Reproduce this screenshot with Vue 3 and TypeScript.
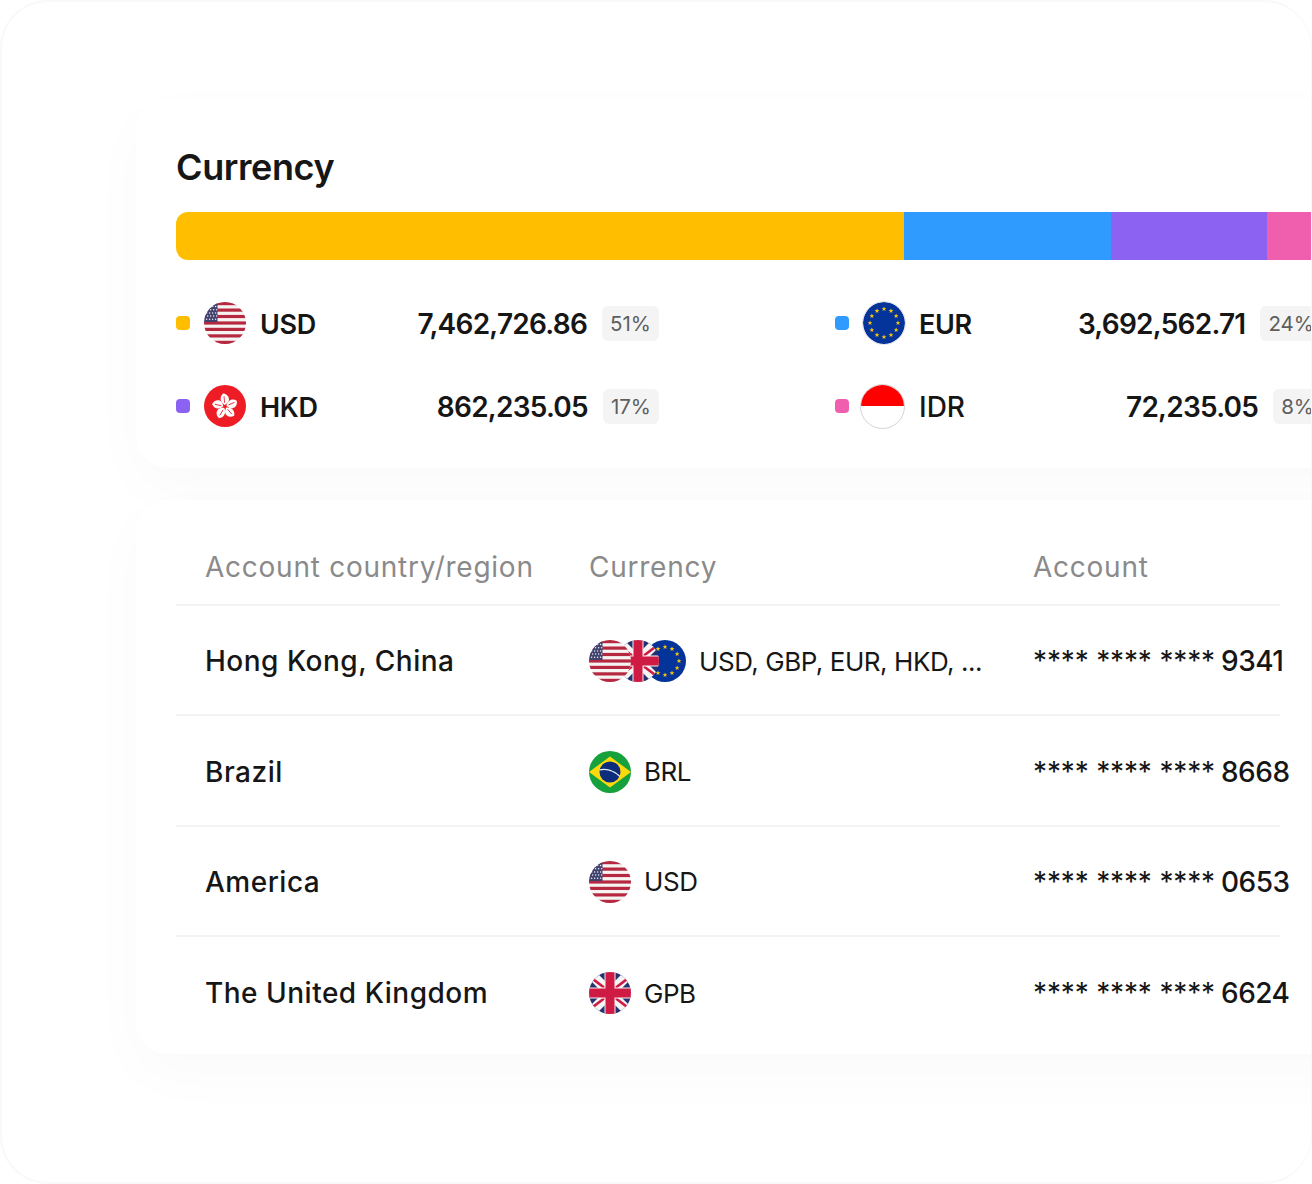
<template>
  <div class="frame">
    <svg class="flag-defs" width="0" height="0" aria-hidden="true">
      <defs>
        <clipPath id="round"><circle cx="21" cy="21" r="21" /></clipPath>
        <polygon id="star" points="0,-2.5 .7,-.8 2.4,-.8 1,.35 1.5,2 0,1 -1.5,2 -1,.35 -2.4,-.8 -.7,-.8" />
        <path id="petal" d="M-.3 -1.5 C-4.5 -4 -5.5 -8.5 -1.8 -12 C2.8 -11.5 4.6 -7.5 3.2 -4.6 C2.5 -3.2 1 -2.2 -.3 -1.5Z" />
        <symbol id="flag-usd" viewBox="0 0 42 42">
          <g clip-path="url(#round)">
            <rect width="42" height="42" fill="#f6f3f3" />
            <rect v-for="y in usStripes" :key="y" x="0" :y="y" width="42" height="3.2" fill="#b5283f" />
            <rect width="13.5" height="20" fill="#42426f" />
            <circle v-for="d in usDots" :key="d.x + '-' + d.y" :cx="d.x" :cy="d.y" r=".75" fill="#eaeaf2" />
          </g>
        </symbol>
        <symbol id="flag-hkd" viewBox="0 0 42 42">
          <circle cx="21" cy="21" r="21" fill="#ee1c25" />
          <g transform="translate(21 21.5) scale(1.08)">
            <g v-for="a in petals" :key="a" :transform="`rotate(${a})`">
              <use href="#petal" fill="#fff" />
              <path d="M-.4 -3.5 L-.9 -9.5" stroke="#ee1c25" stroke-width=".8" fill="none" />
            </g>
          </g>
        </symbol>
        <symbol id="flag-eur" viewBox="0 0 42 42">
          <circle cx="21" cy="21" r="21" fill="#04349a" />
          <use v-for="s in euStars" :key="s.x" href="#star" :x="s.x" :y="s.y" fill="#fbc50b" />
        </symbol>
        <symbol id="flag-gbp" viewBox="0 0 42 42">
          <g clip-path="url(#round)">
            <rect width="42" height="42" fill="#26316f" />
            <path d="M0 0 L42 42 M42 0 L0 42" stroke="#f5f5f5" stroke-width="10" />
            <path d="M0 4 L17 17 M42 4 L25 17 M0 38 L17 25 M42 38 L25 25" stroke="#cf1b43" stroke-width="2.6" />
            <rect x="15.5" width="11" height="42" fill="#f5f5f5" />
            <rect y="15.5" width="42" height="11" fill="#f5f5f5" />
            <rect x="16.5" width="9" height="42" fill="#cf1b43" />
            <rect y="16.5" width="42" height="9" fill="#cf1b43" />
          </g>
        </symbol>
        <symbol id="flag-brl" viewBox="0 0 42 42">
          <g clip-path="url(#round)">
            <rect width="42" height="42" fill="#16a13c" />
            <path d="M21 5.5 L42 21 L21 36.5 L0 21Z" fill="#fbd90c" />
            <circle cx="21" cy="21" r="10.5" fill="#0c2c7c" />
            <path d="M10.8 18.8 C17 17.5 25 19.5 31 25.5" fill="none" stroke="#e9edf4" stroke-width="1.3" />
          </g>
        </symbol>
      </defs>
    </svg>

    <section class="card summary">
      <h1 class="title">Currency</h1>
      <div class="bar">
        <span v-for="s in segments" :key="s.color" class="bar-seg" :style="{ width: s.width + 'px', background: s.color }"></span>
      </div>
      <div class="legend">
        <div v-for="item in legend" :key="item.code" class="legend-item">
          <span class="dot" :style="{ background: item.color }"></span>
          <span v-if="item.code === 'IDR'" class="idr"><span class="idr-top"></span></span>
          <svg v-else class="flag" :class="{ ring: item.code === 'EUR' }" viewBox="0 0 42 42"><use :href="'#flag-' + item.code.toLowerCase()" /></svg>
          <span class="code" :class="{ plain: item.code === 'IDR' }">{{ item.code }}</span>
          <span class="amount">{{ item.amount }}</span>
          <span class="pct">{{ item.pct }}</span>
        </div>
      </div>
    </section>

    <section class="card accounts">
      <div class="row head">
        <span>Account country/region</span>
        <span>Currency</span>
        <span>Account</span>
      </div>
      <div v-for="r in rows" :key="r.name" class="row">
        <span class="name">{{ r.name }}</span>
        <span class="cur">
          <span class="stack">
            <svg v-for="f in r.flags" :key="f" class="flag" viewBox="0 0 42 42"><use :href="'#flag-' + f" /></svg>
          </span>
          <span class="cur-text">{{ r.cur }}</span>
        </span>
        <span class="acc"><span class="mask">**** **** ****</span><span class="last">{{ r.last }}</span></span>
      </div>
    </section>
  </div>
</template>

<script setup lang="ts">
const usStripes = [0, 6.5, 12.9, 19.4, 25.8, 32.3, 38.8]
const usDots: { x: number; y: number }[] = []
for (let r = 0; r < 5; r++) {
  for (let c = 0; c < 4; c++) {
    usDots.push({ x: 2.6 + c * 3 + (r % 2) * 1, y: 4.5 + r * 3.2 })
  }
}
const petals = [0, 72, 144, 216, 288]
const euStars = Array.from({ length: 12 }, (_, i) => ({
  x: 21 + 14 * Math.sin((i * Math.PI) / 6),
  y: 21 - 14 * Math.cos((i * Math.PI) / 6),
}))

const segments = [
  { color: '#ffbf00', width: 728 },
  { color: '#2f9bff', width: 207 },
  { color: '#8c62f2', width: 156 },
  { color: '#f05fae', width: 60 },
]

const legend = [
  { code: 'USD', color: '#ffbf00', amount: '7,462,726.86', pct: '51%' },
  { code: 'EUR', color: '#2f9bff', amount: '3,692,562.71', pct: '24%' },
  { code: 'HKD', color: '#8c62f2', amount: '862,235.05', pct: '17%' },
  { code: 'IDR', color: '#f05fae', amount: '72,235.05', pct: '8%' },
]

const rows = [
  { name: 'Hong Kong, China', flags: ['usd', 'gbp', 'eur'], cur: 'USD, GBP, EUR, HKD, ...', last: '9341' },
  { name: 'Brazil', flags: ['brl'], cur: 'BRL', last: '8668' },
  { name: 'America', flags: ['usd'], cur: 'USD', last: '0653' },
  { name: 'The United Kingdom', flags: ['gbp'], cur: 'GPB', last: '6624' },
]
</script>

<style>
body {
  background: #fff;
}
</style>

<style scoped>
.frame {
  box-sizing: border-box;
  width: 1312px;
  height: 1184px;
  padding: 99px 0 0 134px;
  background: #fff;
  border: 2px solid #f9f9f9;
  border-right-width: 1px;
  border-radius: 48px;
  overflow: hidden;
  display: flex;
  flex-direction: column;
  gap: 34px;
  font-family: Inter, "Liberation Sans", sans-serif;
  color: #161616;
}

.flag-defs {
  position: absolute;
}

.card {
  box-sizing: border-box;
  width: 1300px;
  background: #fff;
  border-radius: 32px;
  box-shadow: 0 20px 60px rgba(0, 0, 0, 0.022);
  flex-shrink: 0;
  margin-top: -2px;
}

.summary {
  height: 369px;
  padding: 44px 0 0 40px;
}

.title {
  margin: 0;
  font-size: 36px;
  line-height: 48px;
  font-weight: 600;
  letter-spacing: -0.4px;
}

.bar {
  display: flex;
  height: 48px;
  margin-top: 21px;
  border-radius: 12px 0 0 12px;
  overflow: hidden;
}

.bar-seg {
  display: block;
  flex-shrink: 0;
}

.legend {
  display: grid;
  grid-template-columns: 483px 487px;
  column-gap: 176px;
  row-gap: 39px;
  margin-top: 41px;
}

.legend-item {
  display: flex;
  align-items: center;
  height: 44px;
}

.dot {
  width: 14px;
  height: 14px;
  border-radius: 4px;
  margin-right: 14px;
  flex-shrink: 0;
}

.flag {
  display: block;
  width: 42px;
  height: 42px;
  flex-shrink: 0;
}

.flag.ring {
  box-sizing: border-box;
  width: 44px;
  height: 44px;
  margin-left: -1px;
  margin-right: -1px;
  border: 1px solid #e4e4e8;
  border-radius: 50%;
}

.idr {
  display: block;
  box-sizing: border-box;
  width: 45px;
  height: 45px;
  margin-left: -3px;
  border: 1px solid #d9d2d2;
  border-radius: 50%;
  overflow: hidden;
  background: #fff;
  flex-shrink: 0;
}

.idr-top {
  display: block;
  height: 50%;
  background: #fe0000;
}

.code {
  margin-left: 14px;
  padding-top: 2px;
  font-size: 27px;
  font-weight: 600;
  letter-spacing: -0.3px;
}

.code.plain {
  font-size: 28px;
  font-weight: 500;
  letter-spacing: 0;
}

.amount {
  margin-left: auto;
  padding-top: 2px;
  font-size: 28px;
  font-weight: 600;
  letter-spacing: -0.75px;
}

.pct {
  box-sizing: border-box;
  height: 35px;
  margin-left: 15px;
  padding: 0 8px;
  border-radius: 6px;
  background: #f4f4f4;
  color: #5e5e5e;
  font-size: 20.5px;
  line-height: 35px;
}

.accounts {
  height: 554px;
  padding: 0 0 0 40px;
}

.row {
  box-sizing: border-box;
  width: 1104px;
  height: 110.4px;
  padding: 2px 0 0 29px;
  display: grid;
  grid-template-columns: 384px 444px 1fr;
  align-items: center;
  border-bottom: 2px solid #f3f3f3;
  white-space: nowrap;
}

.row:last-child {
  border-bottom: none;
}

.head {
  height: 106px;
  padding-top: 29px;
  color: #8a8a8a;
  font-size: 28px;
  letter-spacing: 0.75px;
}

.name {
  font-size: 28px;
  font-weight: 500;
  letter-spacing: 0.5px;
}

.cur {
  display: flex;
  align-items: center;
}

.stack {
  display: flex;
  isolation: isolate;
}

.stack .flag {
  position: relative;
}

.stack .flag + .flag {
  margin-left: -14.5px;
  z-index: -1;
}

.stack .flag + .flag + .flag {
  z-index: -2;
}

.cur-text {
  margin-left: 13px;
  font-size: 26px;
  letter-spacing: -0.45px;
}

.acc {
  display: flex;
  align-items: center;
}

.mask {
  font-size: 28px;
  letter-spacing: -0.15px;
  width: 188px;
}

.last {
  font-size: 28px;
  font-weight: 500;
  letter-spacing: -0.5px;
}
</style>
